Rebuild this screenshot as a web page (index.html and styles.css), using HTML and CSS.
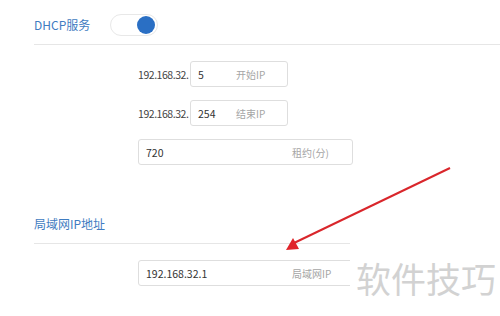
FILE: index.html
```html
<!DOCTYPE html>
<html lang="zh-CN">
<head>
    <meta charset="UTF-8">
    <title>DHCP服务</title>
    <link rel="stylesheet" href="styles.css">
</head>
<body>
    <div class="page">
        <div class="section-head">
            <span class="section-title">DHCP服务</span>
            <span class="switch"><span class="knob"></span></span>
        </div>

        <div class="form">
            <div class="row">
                <span class="prefix">192.168.32.</span>
                <div class="field short">
                    <span class="value">5</span>
                    <span class="hint">开始IP</span>
                </div>
            </div>
            <div class="row">
                <span class="prefix">192.168.32.</span>
                <div class="field short">
                    <span class="value">254</span>
                    <span class="hint">结束IP</span>
                </div>
            </div>
            <div class="row">
                <div class="field wide">
                    <span class="value">720</span>
                    <span class="hint">租约(分)</span>
                </div>
            </div>
        </div>

        <div class="section-head lan">
            <span class="section-title">局域网IP地址</span>
        </div>

        <div class="form lan-form">
            <div class="row">
                <div class="field wide">
                    <span class="value">192.168.32.1</span>
                    <span class="hint">局域网IP</span>
                </div>
            </div>
        </div>

        <svg class="arrow" width="500" height="316" viewBox="0 0 500 316">
            <line x1="450" y1="168" x2="294" y2="243" stroke="#d9262b" stroke-width="2"/>
            <polygon points="286,250 299,249 293,238" fill="#e0242a"/>
        </svg>
        <span class="watermark">软件技巧</span>
    </div>
</body>
</html>
```

FILE: styles.css
```css
body {
    margin: 0;
    background-color: #fff;
    font-family: "Noto Sans CJK SC", "Noto Sans", sans-serif;
    color: #333;
}

.page {
    position: relative;
    width: 500px;
    height: 316px;
    overflow: hidden;
}

.section-head {
    display: flex;
    align-items: center;
    gap: 20px;
    margin-left: 34px;
    padding: 14px 0 8px;
    border-bottom: 1px solid #e6e6e6;
}

.section-title {
    font-size: 12px;
    line-height: 22px;
    color: #3f7cc1;
}

.switch {
    display: flex;
    align-items: center;
    justify-content: flex-end;
    box-sizing: border-box;
    width: 48px;
    height: 22px;
    padding-right: 2px;
    border: 1px solid #e8e8e8;
    border-radius: 11px;
    background-color: #fff;
}

.knob {
    width: 18px;
    height: 18px;
    border-radius: 50%;
    background-color: #2a6fc4;
}

.form {
    display: flex;
    flex-direction: column;
    gap: 13px;
    margin: 16px 0 0 138px;
}

.row {
    display: flex;
    align-items: center;
    height: 26px;
}

.prefix {
    width: 52px;
    font-size: 10.5px;
    letter-spacing: -0.45px;
    color: #444;
}

.field {
    display: flex;
    align-items: center;
    box-sizing: border-box;
    height: 26px;
    padding-left: 7px;
    border: 1px solid #dedede;
    border-radius: 3px;
    font-size: 10.5px;
}

.field.short {
    width: 98px;
}

.field.wide {
    width: 215px;
}

.value {
    color: #333;
}

.short .value {
    width: 38px;
}

.wide .value {
    flex: 1;
}

.hint {
    color: #a5a5a5;
    font-size: 10px;
}

.wide .hint {
    width: 60px;
}

.section-head.lan {
    width: 316px;
    margin-top: 44px;
    padding: 4px 0 8px;
}

.lan-form {
    margin-top: 16px;
}

.arrow {
    position: absolute;
    left: 0;
    top: 0;
}

.watermark {
    position: absolute;
    left: 350px;
    top: 255px;
    width: 150px;
    padding-left: 6px;
    background-color: #fff;
    font-size: 35px;
    line-height: 46px;
    color: #d2d2d2;
}
```
